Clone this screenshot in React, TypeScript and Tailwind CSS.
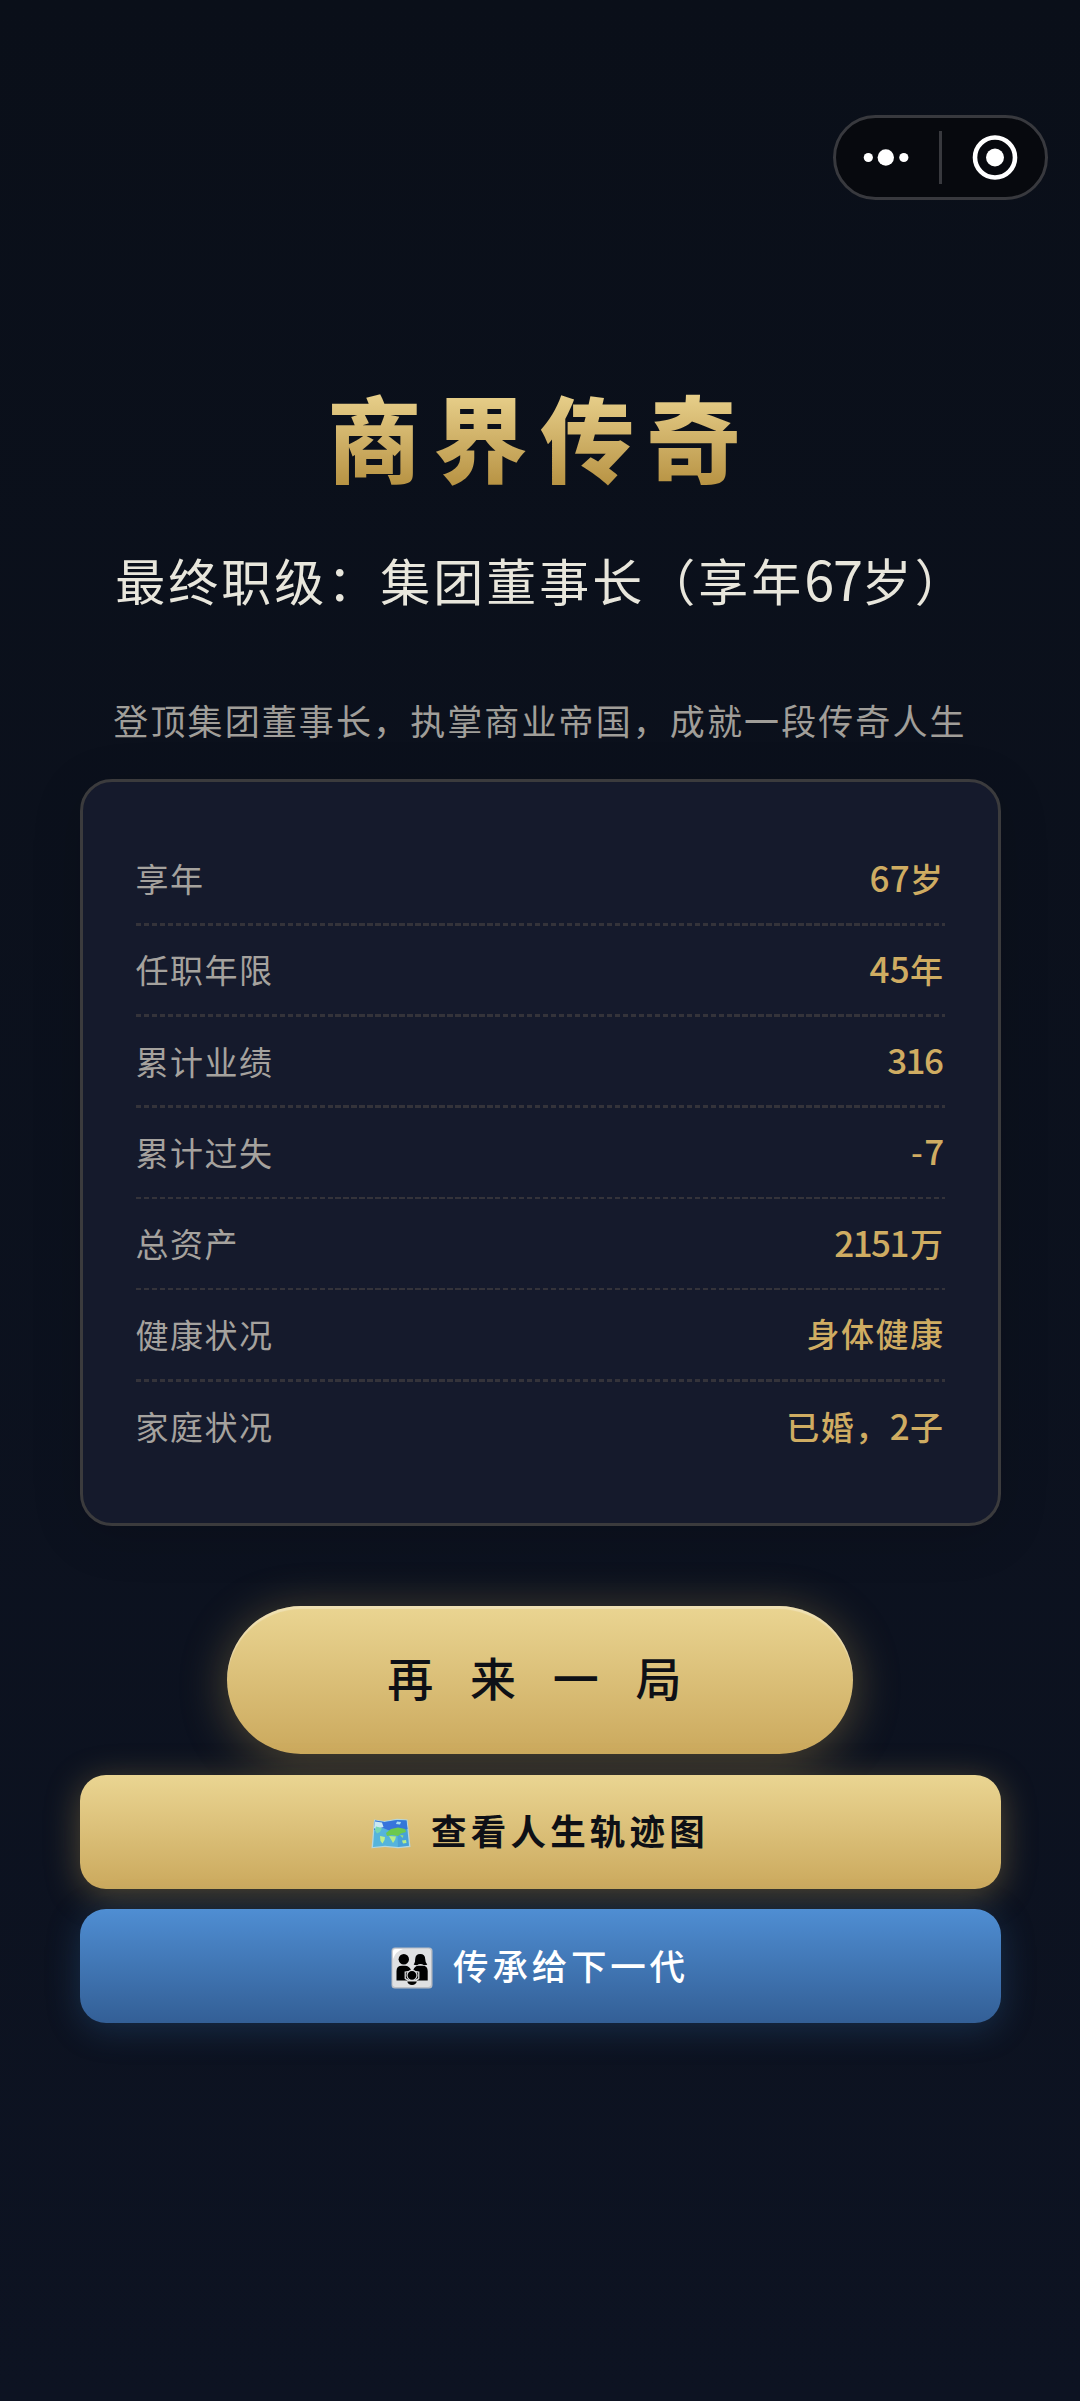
import { useState } from "react";
import clsx from "clsx";

interface StatProps {
    label: string;
    value: string;
}

const stats: StatProps[] = [
    { label: "享年", value: "67岁" },
    { label: "任职年限", value: "45年" },
    { label: "累计业绩", value: "316" },
    { label: "累计过失", value: "-7" },
    { label: "总资产", value: "2151万" },
    { label: "健康状况", value: "身体健康" },
    { label: "家庭状况", value: "已婚，2子" },
];

// 右上角胶囊
const Capsule = () => (
    <div className="mt-[115px] mr-8 self-end flex items-center w-[215px] h-[85px] rounded-full border-[3px] border-[#38393e] bg-[#07090e]">
        <svg viewBox="0 0 103 79" className="w-[103px] h-[79px]" fill="#fff">
            <circle cx="32.3" cy="39.5" r="4.6" />
            <circle cx="49.8" cy="39.5" r="8.2" />
            <circle cx="67.8" cy="39.5" r="4.6" />
        </svg>
        <div className="w-[3px] h-[53px] bg-[#38393e]"></div>
        <svg viewBox="0 0 103 79" className="w-[103px] h-[79px]">
            <circle cx="53" cy="39.5" r="20" fill="none" stroke="#fff" strokeWidth="4.6" />
            <circle cx="53" cy="39.5" r="9" fill="#fff" />
        </svg>
    </div>
);

const MapIcon = () => (
    <svg viewBox="0 0 40 31" className="mt-0.5 w-10 h-[31px]">
        <path d="M3 1.5 13 3 26 .8 36.5 1.5 39.5 29 27 30.2 14 29 .5 30.2Z" fill="#b4d6df" />
        <path d="M4 2.5 13.5 4 26 2 35.5 2.5 38 27.8 27 29 14 27.8 2 29Z" fill="#55b4dc" />
        <path d="M4 2.5 13.5 4 26 2 35.5 2.5 36.5 11 22 14 12 10 3 12Z" fill="#3774dc" />
        <path d="M26 2 35.5 2.5 38 27.8 27 29Z" fill="#2f7fd2" opacity=".35" />
        <path d="M4 3.5 11 4.5 12.5 9 9 10 7.5 13 3 10Z" fill="#c9e9f2" />
        <path d="M15 15 20 11 27 9.5 34 11 35 14 30 15.5 27 18 21 17 16 18Z" fill="#6cc94d" />
        <path d="M5 8.5 11 10 9 14 6 15.5 3.8 12Z" fill="#76d7b2" />
        <path d="M9 18 14 19 13.5 22 11.5 25.5 9.5 23Z" fill="#bdf08a" />
        <path d="M18 18 25 18.5 24 22 22 25 20 21.5Z" fill="#b6ee88" />
        <path d="M29 17 32.5 17.5 31.5 20Z" fill="#9be277" />
        <path d="M31 22.5 35 22 35.5 25 32 25.5Z" fill="#b6ee88" />
        <path d="M26 3.5 30 4 29 6.5 25 6Z" fill="#a6dcf1" />
    </svg>
);

const FamilyIcon = () => (
    <svg viewBox="0 0 42 42" className="mt-1 w-[42px] h-[42px]">
        <rect x=".5" y=".5" width="41" height="41" rx="3.5" fill="#b9bdc4" />
        <rect x="1.5" y="1.5" width="38.5" height="38.5" rx="3" fill="#dfe0e2" />
        <path d="M2 12V5Q2 2 5 2H12Q5 4 2 12Z" fill="#fff" />
        <g fill="#000">
            <circle cx="12.8" cy="12.2" r="5.2" />
            <path d="M5.5 33.5V24Q5.5 18.7 11 18.7H14Q18.5 18.7 20 23.2L14 25V32L17 33.5Z" />
            <path d="M22.7 17.8Q24.3 16 24.2 12Q24.5 7 29.2 7Q34 7 34.2 12Q34.3 16 36.3 17.8L33 18.2Q29.3 16 26 18.2Z" />
            <path d="M36.7 33.5V24Q36.7 18.7 31.5 18.7H27.5Q23.5 18.7 22.3 23.2L28 25V32L25.5 33.5Z" />
        </g>
        {/* 孩子 */}
        <path
            d="M18 25H14.2V31.5L18 33.6H24L27.8 31.5V25H24"
            fill="#000"
            stroke="#dfe0e2"
            strokeWidth="1.2"
        />
        <circle cx="21" cy="28.3" r="5" fill="#000" stroke="#dfe0e2" strokeWidth="1.2" />
        <path d="M16.3 34.6H25.8Q25 38 21 38Q17 38 16.3 34.6Z" fill="#000" />
    </svg>
);

const StatRow = ({ label, value }: StatProps) => {
    // 数字和汉字分开排
    const parts = value.split(/(\d+)/).filter(Boolean);

    return (
        <li className="group">
            <div className="h-[88.3px] flex justify-between items-center text-[33px] tracking-[1.5px] group-last:h-[90px]">
                <span className="text-[#a5a29e]">{label}</span>
                <span className="pb-[3px] font-medium text-[#cfac62] leading-[48px]">
                    {parts.map((part) => (
                        <span
                            key={part}
                            className={clsx(
                                /\d/.test(part) && "text-[35px]",
                                /\d/.test(part) &&
                                    (part.includes("1") ? "mr-[2px] tracking-[-1.5px]" : "tracking-[0.3px]")
                            )}
                        >
                            {part}
                        </span>
                    ))}
                </span>
            </div>
            <div className="h-[2.8px] bg-[repeating-linear-gradient(90deg,#34333a_0_5.4px,transparent_5.4px_7.98px)] group-last:hidden"></div>
        </li>
    );
};

const App = () => {
    const [round, setRound] = useState(1);

    return (
        <div
            key={round}
            className="w-[1080px] h-[2401px] overflow-hidden flex flex-col items-center bg-linear-to-b from-[#0a0f19] to-[#0d1322] font-['Noto_Sans_CJK_SC',sans-serif]"
        >
            <Capsule />

            <h1 className="mt-[180px] h-[110px] leading-[110px] text-[94px] font-black tracking-[12.4px] bg-linear-to-b from-[#ecd591] from-5% to-[#b5903f] to-100% bg-clip-text text-transparent">
                商界传奇
            </h1>
            <p className="mt-[53px] h-[72px] pl-[3px] leading-[70px] text-[50px] tracking-[3px] text-[#e8e6dc] whitespace-nowrap">
                最终职级：集团董事长（享年
                <span className="text-[54px] tracking-[-1.2px]">67</span>岁）
            </p>
            <p className="mt-20 h-[50px] leading-[50px] text-[35px] tracking-[2.1px] text-[#a09e99] whitespace-nowrap">
                登顶集团董事长，执掌商业帝国，成就一段传奇人生
            </p>

            <ul className="mt-[34px] w-[921px] h-[747px] px-[53px] pt-[53px] rounded-[32px] border-[3px] border-[#3b3b3d] bg-[#151a2c] shadow-[0_10px_50px_rgba(0,0,0,0.15)]">
                {stats.map((stat) => (
                    <StatRow key={stat.label} {...stat} />
                ))}
            </ul>

            <button
                type="button"
                onClick={() => setRound(round + 1)}
                className="mt-20 w-[626px] h-[148px] pb-2 shrink-0 rounded-full bg-linear-to-b from-[#ead592] to-[#cba95d] text-[46px] font-medium tracking-[11.5px] [word-spacing:3.4px] text-[#0e1016] shadow-[0_6px_46px_rgba(212,175,88,0.35),inset_0_3px_1px_rgba(255,255,255,0.3)]"
            >
                再 来 一 局
            </button>
            <button
                type="button"
                className="mt-[21px] w-[921px] h-[114px] shrink-0 flex justify-center items-center gap-5 rounded-[26px] bg-linear-to-b from-[#ead592] to-[#cba95d] text-[35.5px] font-bold tracking-[4.2px] text-[#0e1016] shadow-[0_6px_34px_rgba(212,175,88,0.35)]"
            >
                <MapIcon />
                <span className="pb-1">查看人生轨迹图</span>
            </button>
            <button
                type="button"
                className="mt-5 w-[921px] h-[114px] shrink-0 flex justify-center items-center gap-5 rounded-[26px] bg-linear-to-b from-[#4f8ed3] to-[#335f96] text-[35.5px] font-medium tracking-[3.8px] text-white shadow-[0_6px_34px_rgba(60,130,200,0.25)]"
            >
                <FamilyIcon />
                <span className="pb-[3px]">传承给下一代</span>
            </button>
        </div>
    );
};

export default App;
